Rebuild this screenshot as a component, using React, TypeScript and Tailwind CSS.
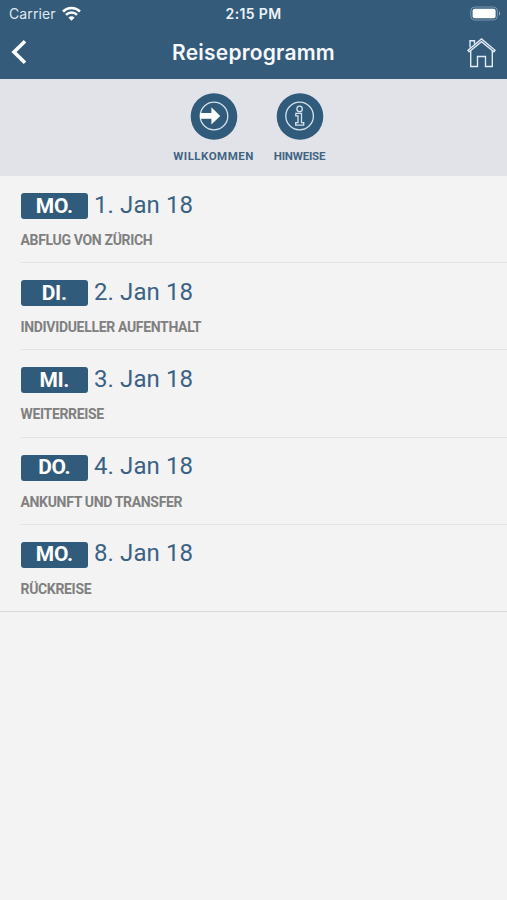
import React from "react";

type Day = { weekday: string; date: string; title: string };

const days: Day[] = [
  { weekday: "MO.", date: "1. Jan 18", title: "ABFLUG VON ZÜRICH" },
  { weekday: "DI.", date: "2. Jan 18", title: "INDIVIDUELLER AUFENTHALT" },
  { weekday: "MI.", date: "3. Jan 18", title: "WEITERREISE" },
  { weekday: "DO.", date: "4. Jan 18", title: "ANKUNFT UND TRANSFER" },
  { weekday: "MO.", date: "8. Jan 18", title: "RÜCKREISE" },
];

function StatusBar() {
  return (
    <div className="grid h-7 grid-cols-3 items-center pl-[9px] pr-[6px] font-[Inter,sans-serif] text-white">
      <div className="flex items-center gap-[6px]">
        <span className="text-[14px] leading-none tracking-[0.1px] text-[#dfe8f2]">Carrier</span>
        <svg className="-mt-[2px]" width="19" height="15" viewBox="0 0 19 15" fill="none" stroke="#fff" strokeWidth="2.5">
          <path d="M1 5.5a12.2 12.2 0 0 1 17 0" />
          <path d="M4 8.9a7.6 7.6 0 0 1 11 0" />
          <path d="M6.5 11.7a4 4 0 0 1 6 0L9.5 14.8z" fill="#fff" stroke="none" />
        </svg>
      </div>
      <span className="-ml-[3px] text-center text-[14px] font-semibold leading-none tracking-[0.35px] text-[#edf3fa]">2:15 PM</span>
      <svg className="justify-self-end" width="31" height="16" viewBox="0 0 31 16">
        <rect x="0.8" y="1" width="26.6" height="13" rx="4" fill="none" stroke="#7b98b1" strokeWidth="1" />
        <rect x="2.6" y="2.8" width="23" height="9.4" rx="2" fill="#fff" />
        <path d="M29 5.3c1.6.7 1.6 3.7 0 4.4z" fill="#8fa9c0" />
      </svg>
    </div>
  );
}

function TitleBar() {
  return (
    <div className="grid h-[51px] grid-cols-[60px_1fr_60px] items-center">
      <svg className="ml-[11px] -mt-[4px]" width="17" height="26" viewBox="0 0 17 26" fill="none" stroke="#fff" strokeWidth="3.6">
        <path d="M14 2.2 3 13l11 10.8" />
      </svg>
      <h1 className="-mt-[3px] text-center font-[Inter,sans-serif] text-[21px] font-semibold leading-none tracking-[0.2px] text-[#f5f8fd]">
        Reiseprogramm
      </h1>
      <svg className="mr-[11px] justify-self-end" width="29" height="31" viewBox="0 0 29 31" fill="none" stroke="#e1ebf8" strokeWidth="1.4">
        <path d="M3 9.4V2.8h4.5v2.9" />
        <path d="M1 12.3 14.5 1 28 12.3l-1.2 1.5L14.5 3.6 2.2 13.8z" />
        <path d="M3.7 13v15.5h6.8v-10h8v10h6.8V13" />
      </svg>
    </div>
  );
}

function WelcomeIcon() {
  return (
    <svg width="48" height="48" viewBox="0 0 48 48">
      <circle cx="24" cy="24.5" r="23.3" fill="#315b7b" />
      <circle cx="24" cy="24" r="13.8" fill="none" stroke="#d5e2ed" strokeWidth="1.3" />
      <path d="M10 20.9h11.4v-5.6l8.8 8.6-8.8 8.6v-5.7H10z" fill="#fff" />
    </svg>
  );
}

function InfoIcon() {
  return (
    <svg width="48" height="48" viewBox="0 0 48 48">
      <circle cx="24" cy="24.5" r="23.3" fill="#315b7b" />
      <g fill="none" stroke="#d5e2ed" strokeWidth="1.3">
        <circle cx="23.6" cy="24" r="13.8" />
        <circle cx="23.6" cy="16.9" r="2.7" />
        <path d="M19.8 21.3h5.7v9.3h2.2v2.6h-8v-2.6h2.3v-6.7h-2.2z" />
      </g>
    </svg>
  );
}

function Shortcuts() {
  return (
    <nav className="flex h-[97px] justify-center bg-[#e2e3e9] pt-[13px] pr-[8px] text-[11.5px] font-bold leading-none text-[#3f6583]">
      <div className="flex w-[80px] flex-col items-center gap-[11px]">
        <WelcomeIcon />
        <span className="tracking-[0.48px]">WILLKOMMEN</span>
      </div>
      <div className="ml-[20px] flex w-[52px] flex-col items-center gap-[11px]">
        <InfoIcon />
        <span className="tracking-[-0.2px]">HINWEISE</span>
      </div>
    </nav>
  );
}

function DayRow({ day, last }: { day: Day; last: boolean }) {
  return (
    <li className={last ? "border-b border-[#d9dadc]" : ""}>
      <div className={`ml-[20.5px] pt-[13px] ${last ? "h-[86.5px]" : "h-[87.2px] border-b border-[#e4e4e5]"}`}>
        <div className="flex h-[31px] items-center">
          <span className="mt-[3px] flex h-[26px] w-[67.5px] items-center justify-center rounded-[3px] bg-[#315b7b] text-[21px] font-bold leading-none tracking-[-0.3px] text-white">
            {day.weekday}
          </span>
          <span className="ml-[6px] text-[24px] leading-none tracking-[0.1px] text-[#3b6285]">{day.date}</span>
        </div>
        <p className="mt-[13px] text-[14px] font-bold leading-none tracking-[-0.33px] text-[#808080]">{day.title}</p>
      </div>
    </li>
  );
}

export default function App() {
  return (
    <main className="h-[900px] w-[507px] overflow-hidden bg-[#f3f3f3] font-[Roboto,sans-serif]">
      <header className="bg-[#345b79]">
        <StatusBar />
        <TitleBar />
      </header>
      <Shortcuts />
      <ul>
        {days.map((day, i) => (
          <DayRow key={day.date} day={day} last={i === days.length - 1} />
        ))}
      </ul>
    </main>
  );
}
